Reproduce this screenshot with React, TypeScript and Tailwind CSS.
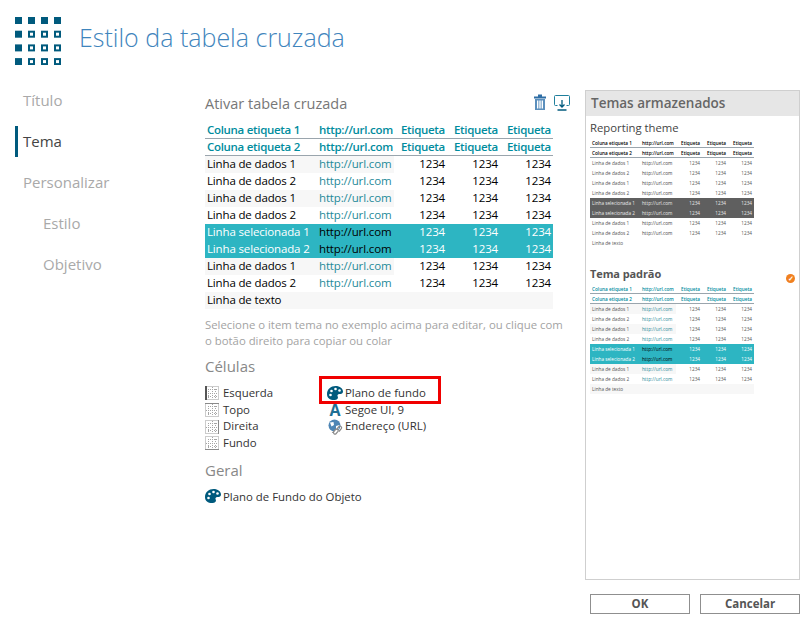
import React from "react";

const teal = "text-[#008c9e]";

type Row = { label: string; kind: "head" | "data" | "selected" | "text"; shade?: boolean };

const rows: Row[] = [
  { label: "Coluna etiqueta 1", kind: "head" },
  { label: "Coluna etiqueta 2", kind: "head" },
  { label: "Linha de dados 1", kind: "data", shade: true },
  { label: "Linha de dados 2", kind: "data" },
  { label: "Linha de dados 1", kind: "data", shade: true },
  { label: "Linha de dados 2", kind: "data" },
  { label: "Linha selecionada 1", kind: "selected" },
  { label: "Linha selecionada 2", kind: "selected" },
  { label: "Linha de dados 1", kind: "data", shade: true },
  { label: "Linha de dados 2", kind: "data" },
  { label: "Linha de texto", kind: "text" },
];

const CrossTable: React.FC = () => (
  <div className="w-[348px] text-[11.5px] leading-[15px] tracking-[-0.15px]">
    {rows.map((r, i) => {
      if (r.kind === "text")
        return (
          <div key={i} className="h-[17px] bg-[#f7f7f7] pl-[2px] text-black">
            {r.label}
          </div>
        );
      if (r.kind === "head")
        return (
          <div
            key={i}
            className={`flex h-[17px] border-b-[1px] border-[#9aa5ad] font-semibold tracking-[-0.3px] ${teal}`}
          >
            <div className="w-[112px] pl-[2px]">{r.label}</div>
            <div className="w-[77px] pl-[2px] whitespace-nowrap">http://url.com</div>
            <div className="w-[53px] pr-[2px] text-right">Etiqueta</div>
            <div className="w-[53px] pr-[2px] text-right">Etiqueta</div>
            <div className="w-[53px] pr-[2px] text-right">Etiqueta</div>
          </div>
        );
      const sel = r.kind === "selected";
      return (
        <div key={i} className={`flex h-[17px] ${sel ? "bg-[#2db5c2] text-white" : "text-black"}`}>
          <div className={`flex w-[189px] ${r.shade ? "bg-[#f7f7f7]" : ""}`}>
            <div className="w-[112px] pl-[2px] whitespace-nowrap">{r.label}</div>
            <div className={`w-[77px] pl-[2px] ${sel ? "text-black" : "text-[#1f8a99]"}`}>http://url.com</div>
          </div>
          <div className="w-[53px] pr-[2px] text-right">1234</div>
          <div className="w-[53px] pr-[2px] text-right">1234</div>
          <div className="w-[53px] pr-[2px] text-right">1234</div>
        </div>
      );
    })}
  </div>
);

const MiniTable: React.FC<{ dark?: boolean }> = ({ dark }) => (
  <div className="w-[164px] text-[4.7px] leading-[10px]">
    {rows.map((r, i) => {
      if (r.kind === "text")
        return (
          <div key={i} className={`h-[10px] pl-[2px] text-[#555] ${dark ? "" : "bg-[#f7f7f7]"}`}>
            {r.label}
          </div>
        );
      if (r.kind === "head")
        return (
          <div
            key={i}
            className={`flex h-[10px] border-b-[1px] border-[#9aa5ad] font-semibold ${dark ? "text-black" : teal}`}
          >
            <div className="w-[52px] pl-[2px]">{r.label}</div>
            <div className="w-[34px] whitespace-nowrap">http://url.com</div>
            <div className="w-[26px] pr-[2px] text-right">Etiqueta</div>
            <div className="w-[26px] pr-[2px] text-right">Etiqueta</div>
            <div className="w-[26px] pr-[2px] text-right">Etiqueta</div>
          </div>
        );
      const sel = r.kind === "selected";
      const rowColor = sel ? (dark ? "bg-[#5f5f5f] text-[#e8e8e8]" : "bg-[#2db5c2] text-white") : "text-[#555]";
      const urlColor = sel ? (dark ? "text-[#e8e8e8]" : "text-black") : dark ? "text-[#444]" : "text-[#1f8a99]";
      return (
        <div key={i} className={`flex h-[10px] ${rowColor}`}>
          <div className={`flex w-[86px] ${r.shade && !dark ? "bg-[#f7f7f7]" : ""}`}>
            <div className="w-[52px] pl-[2px] whitespace-nowrap">{r.label}</div>
            <div className={`w-[34px] ${urlColor}`}>http://url.com</div>
          </div>
          <div className="w-[26px] pr-[2px] text-right">1234</div>
          <div className="w-[26px] pr-[2px] text-right">1234</div>
          <div className="w-[26px] pr-[2px] text-right">1234</div>
        </div>
      );
    })}
  </div>
);

const Logo = () => {
  const cells = [0, 1, 2, 3];
  return (
    <svg width="48" height="48" viewBox="0 0 48 48" className="shrink-0">
      {cells.map((y) =>
        cells.map((x) =>
          x === 0 || y === 0 ? (
            <rect key={`${x}-${y}`} x={x * 13} y={y * 13.7} width="7" height="7" fill="#005a7d" />
          ) : (
            <rect
              key={`${x}-${y}`}
              x={x * 13 + 1}
              y={y * 13.7 + 1}
              width="5"
              height="5"
              fill="none"
              stroke="#005a7d"
              strokeWidth="2"
            />
          )
        )
      )}
    </svg>
  );
};

const CellIcon: React.FC<{ side: "left" | "top" | "right" | "bottom" }> = ({ side }) => (
  <svg width="14" height="14" viewBox="0 0 14 14" className="shrink-0">
    <rect x="0.5" y="0.5" width="13" height="13" fill="none" stroke="#999" strokeDasharray="1 1" />
    <path d="M7.500 1V13M3.500 3V6M3.500 9V12M10.500 3V6M10.500 9V12" stroke="#a5a5a5" strokeDasharray="1 1" />
    <path d="M1 7.500H13M3 3.500H6M9 3.500H12M3 10.500H6M9 10.500H12" stroke="#a5a5a5" strokeDasharray="1 1" />
    {side === "left" && <path d="M1 0V14" stroke="#555" strokeWidth="2" />}
    {side === "top" && <path d="M0 0.500H14" stroke="#8a8a8a" />}
    {side === "right" && <path d="M13.500 0V14" stroke="#8a8a8a" />}
    {side === "bottom" && <path d="M0 13.500H14" stroke="#8a8a8a" />}
  </svg>
);

const PaletteIcon = () => (
  <svg width="16" height="14" viewBox="0 0 16 14" className="shrink-0">
    <path
      d="M0 8C0 3 4 0 8.500 0C13 0 16 2.500 16 5.500C16 7.500 14.500 8 12.500 8C10.500 8 10 9.500 10.800 10.800C11.500 12.500 10 14 7 14C3 14 0 12 0 8Z"
      fill="#005a7d"
    />
    <circle cx="4.500" cy="5" r="1.300" fill="#fff" />
    <circle cx="8.500" cy="3" r="1.300" fill="#fff" />
    <circle cx="12.500" cy="4.500" r="1.300" fill="#fff" />
    <circle cx="3.500" cy="9" r="1.300" fill="#fff" />
  </svg>
);

const TrashIcon = () => (
  <svg width="14" height="17" viewBox="0 0 14 17">
    <path d="M5 1.500h4M1 3.500h12" stroke="#2f6ea5" strokeWidth="2" fill="none" />
    <path d="M2 5h10v11H2z" fill="#5b8fbd" />
    <path d="M4 6.500h1.400v8H4zM6.300 6.500h1.400v8H6.300zM8.600 6.500H10v8H8.600z" fill="#fff" />
  </svg>
);

const ExportIcon = () => (
  <svg width="16" height="16" viewBox="0 0 16 16" fill="none">
    <path d="M3.500 10.500H1.500a1 1 0 0 1-1-1V1.500a1 1 0 0 1 1-1h13a1 1 0 0 1 1 1v8a1 1 0 0 1-1 1h-2" stroke="#1f7f9c" />
    <path d="M8 5v7M5.500 9.500 8 12l2.500-2.500" stroke="#005a7d" strokeWidth="1.300" />
    <path d="M3.500 15h9" stroke="#005a7d" strokeWidth="1.500" />
  </svg>
);

const LinkIcon = () => (
  <svg width="16" height="16" viewBox="0 0 16 16" className="shrink-0" fill="none">
    <circle cx="7.500" cy="6.500" r="6" fill="#4f86b5" />
    <path d="M3 3.500 6.500 3 7 6 4.500 7.500zM9 7l3.500-1-1 4L9 10z" fill="#fff" />
    <path
      d="M6 13.500l2.500-3a1.600 1.600 0 0 1 2.300 2.200l-2 2.300a1.600 1.600 0 0 1-2.300-1.500z"
      stroke="#8a8a8a"
      strokeWidth="1.200"
      fill="#fff"
    />
    <path d="M9.500 10.500l2.500-3a1.600 1.600 0 0 1 2.300 2.200l-2.300 2.800" stroke="#8a8a8a" strokeWidth="1.200" />
  </svg>
);

const navItems = [
  { label: "Título", indent: false },
  { label: "Tema", indent: false, active: true },
  { label: "Personalizar", indent: false },
  { label: "Estilo", indent: true },
  { label: "Objetivo", indent: true },
];

const App: React.FC = () => {
  return (
    <div className="w-[810px] h-[624px] overflow-hidden bg-white text-[#333] font-['Open_Sans','Liberation_Sans',sans-serif]">
      {/* Title bar */}
      <div className="flex h-[85px] items-start gap-[16px] pl-[15px] pt-[17px]">
        <Logo />
        <h1 className="text-[25px] leading-[40px] font-light text-[#3f85bd]">Estilo da tabela cruzada</h1>
      </div>

      <div className="flex">
        {/* Steps */}
        <div className="w-[205px] pl-[15px]">
          {navItems.map((n) => (
            <div
              key={n.label}
              className={`mb-[10px] flex h-[31px] items-center text-[15px] ${
                n.active ? "border-l-[3px] border-[#005a7d] pl-[5px] text-[#444]" : "pl-[8px] text-[#a9a9a9]"
              } ${n.indent ? "ml-[20px]" : ""}`}
            >
              {n.label}
            </div>
          ))}
        </div>

        {/* Theme editor */}
        <div className="w-[380px] pt-[5px]">
          <div className="flex h-[27px] w-[365px] items-center justify-between">
            <h2 className="text-[14.5px] text-[#777]">Ativar tabela cruzada</h2>
            <div className="mb-[2px] flex items-center gap-[7px]">
              <TrashIcon />
              <ExportIcon />
            </div>
          </div>
          <div className="mt-[5px]">
            <CrossTable />
          </div>
          <p className="mt-[8px] w-[362px] text-[11.35px] leading-[16px] text-[#a3a3a3]">
            Selecione o item tema no exemplo acima para editar, ou clique com o botão direito para copiar ou colar
          </p>

          <h3 className="mt-[6px] text-[15px] leading-[22px] text-[#888]">Células</h3>
          <div className="mt-[8px] flex text-[11.4px] leading-[16.700px]">
            <div className="w-[122px]">
              {(
                [
                  ["left", "Esquerda"],
                  ["top", "Topo"],
                  ["right", "Direita"],
                  ["bottom", "Fundo"],
                ] as const
              ).map(([side, label]) => (
                <div key={label} className="flex h-[16.700px] items-center gap-[4px]">
                  <CellIcon side={side} />
                  {label}
                </div>
              ))}
            </div>
            <div>
              <div className="relative flex h-[16.700px] items-center gap-[2px]">
                <PaletteIcon />
                Plano de fundo
                <div className="absolute -left-[8px] -top-[9px] h-[28px] w-[122px] border-[3px] border-[#f00000]" />
              </div>
              <div className="flex h-[16.700px] items-center gap-[2px]">
                <span className="w-[16px] text-center text-[16px] font-bold leading-none text-[#1f6f94]">A</span>
                Segoe UI, 9
              </div>
              <div className="flex h-[16.700px] items-center gap-[2px]">
                <LinkIcon />
                Endereço (URL)
              </div>
            </div>
          </div>

          <h3 className="mt-[7px] text-[15px] leading-[22px] text-[#888]">Geral</h3>
          <div className="mt-[7px] flex h-[17px] items-center gap-[2px] text-[11.4px]">
            <PaletteIcon />
            Plano de Fundo do Objeto
          </div>
        </div>

        {/* Stored themes */}
        <div className="w-[215px]">
          <div className="mt-[5px] h-[490px] border-[1.500px] border-[#cfcfcf]">
            <div className="flex h-[25px] items-center bg-[#e6e6e6] pl-[5px] text-[13.5px] font-semibold text-[#666]">
              Temas armazenados
            </div>
            <div className="pl-[4px]">
              <div className="mt-[2px] h-[20px] text-[11.3px] leading-[20px] text-[#444]">Reporting theme</div>
              <MiniTable dark />
              <div className="relative mt-[16px] h-[20px] text-[11px] font-bold leading-[20px] tracking-[-0.1px] text-[#555]">
                Tema padrão
                <span className="absolute right-[4px] top-[10px] flex h-[9px] w-[9px] items-center justify-center rounded-full bg-[#f08020] text-[7px] leading-none text-white">
                  ✓
                </span>
              </div>
              <MiniTable />
            </div>
          </div>
          <div className="ml-[5px] mt-[14px] flex gap-[10px]">
            <button className="h-[20px] w-[100px] border-[1px] border-[#8f8f8f] bg-white text-[11.500px] leading-none font-bold text-[#555]">
              OK
            </button>
            <button className="h-[20px] w-[100px] border-[1px] border-[#8f8f8f] bg-white text-[11.500px] leading-none font-bold text-[#555]">
              Cancelar
            </button>
          </div>
        </div>
      </div>
    </div>
  );
};

export default App;
